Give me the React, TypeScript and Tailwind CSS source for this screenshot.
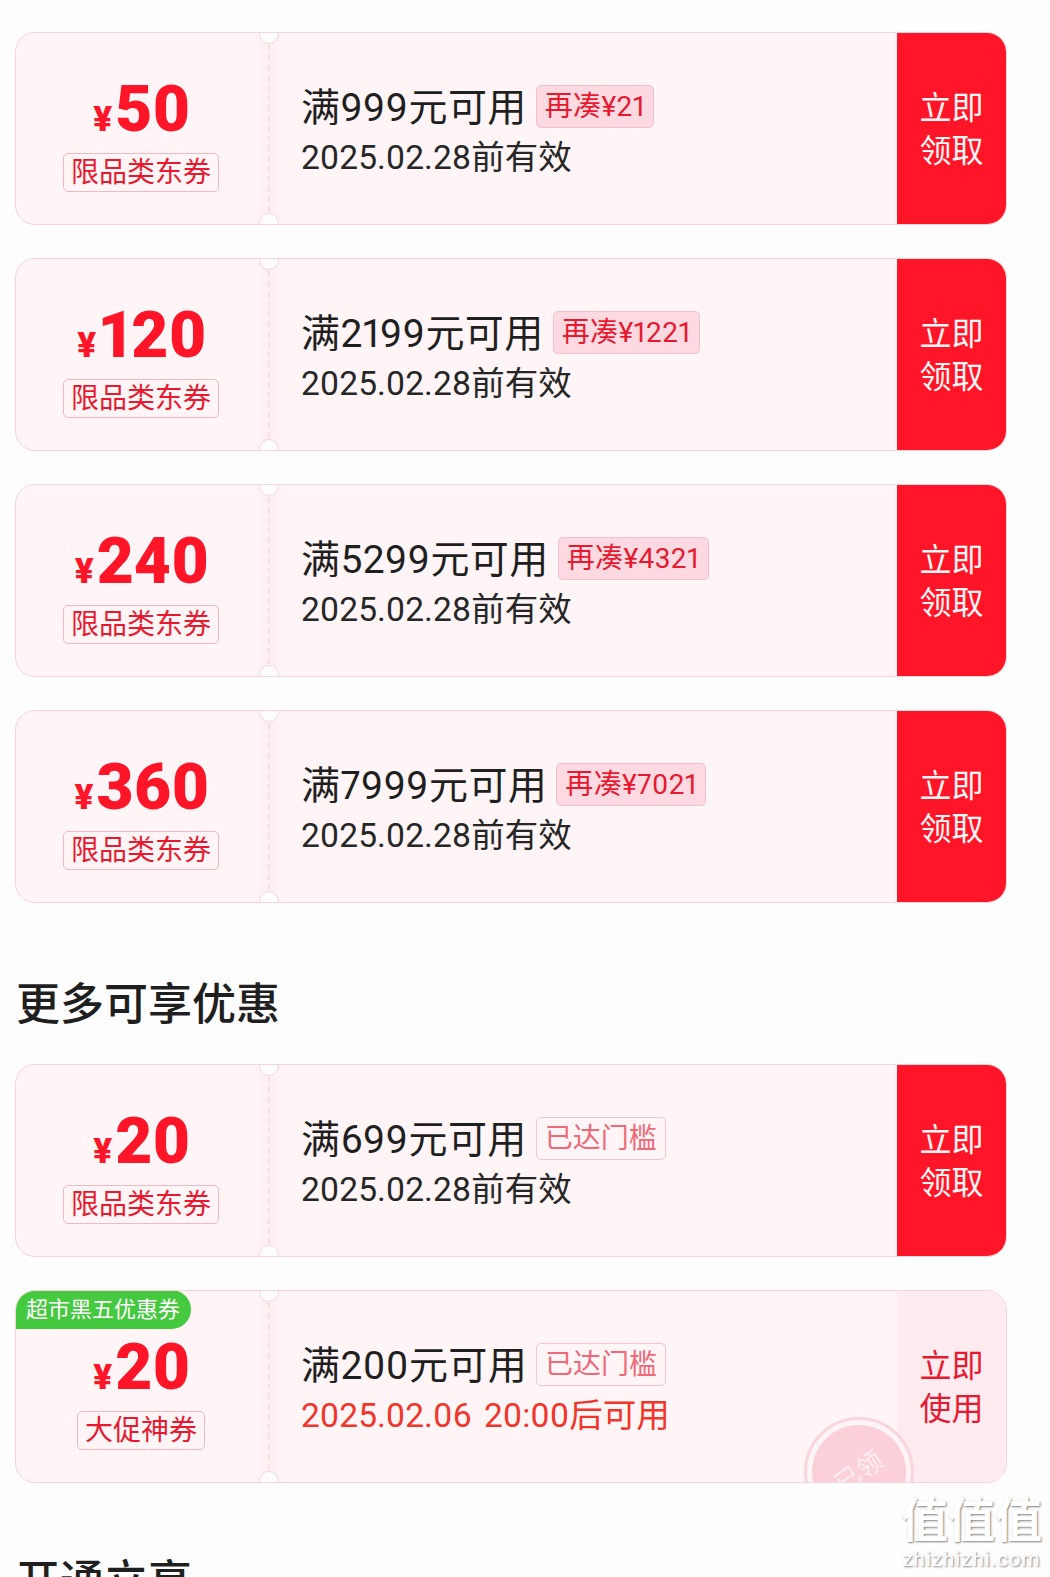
const font = { fontFamily: 'Roboto, "Noto Sans CJK SC", sans-serif' };

type Coupon = {
  amount: string;
  label: string;
  title: string;
  tag: string;
  reached?: boolean;
  date?: string;
  badge?: string;
  used?: boolean;
};

const first: Coupon[] = [
  { amount: "50", label: "限品类东券", title: "满999元可用", tag: "再凑¥21" },
  { amount: "120", label: "限品类东券", title: "满2199元可用", tag: "再凑¥1221" },
  { amount: "240", label: "限品类东券", title: "满5299元可用", tag: "再凑¥4321" },
  { amount: "360", label: "限品类东券", title: "满7999元可用", tag: "再凑¥7021" },
];

const more: Coupon[] = [
  { amount: "20", label: "限品类东券", title: "满699元可用", tag: "已达门槛", reached: true },
  {
    amount: "20",
    label: "大促神券",
    title: "满200元可用",
    tag: "已达门槛",
    reached: true,
    date: "2025.02.06 20:00后可用",
    badge: "超市黑五优惠券",
    used: true,
  },
];

function CouponCard({ coupon }: { coupon: Coupon }) {
  return (
    <div className="relative flex h-[193px] w-[992px] overflow-hidden rounded-[20px] border border-[#f6d5da] bg-[#fff5f7]">
      {coupon.badge && (
        <div className="absolute left-[-1px] top-[-1px] z-10 flex h-[39px] items-center rounded-tl-[20px] rounded-tr-[20px] rounded-br-[20px] bg-[#45c93f] px-[11px] text-[22px] text-white">
          {coupon.badge}
        </div>
      )}

      <div className="flex w-[250px] shrink-0 flex-col items-center justify-center pl-[2px] pt-[13px]">
        <div className="flex h-[62px] items-baseline leading-none text-[#ff1528]">
          <span className="mr-[3px] text-[35px] font-black">¥</span>
          <span className="text-[64px] font-black">{coupon.amount}</span>
        </div>
        <div className="ml-[-2px] mt-[13px] flex h-[39px] items-center rounded-[5px] border border-[#f3b9c3] px-[7px] text-[28px] leading-none text-[#e8192f]">
          {coupon.label}
        </div>
      </div>

      <div className="relative ml-[-11px] w-[28px] shrink-0 bg-[linear-gradient(90deg,#fff5f7,#fdeef1_50%,#fff5f7)]">
        <div className="absolute bottom-[12px] left-[13px] top-[12px] border-l-2 border-dashed border-[#f9dfe3]" />
        <div className="absolute left-[4px] top-[-9px] h-[20px] w-[20px] rounded-full border border-[#f6d5da] bg-[#fdfdfd]" />
        <div className="absolute bottom-[-9px] left-[4px] h-[20px] w-[20px] rounded-full border border-[#f6d5da] bg-[#fdfdfd]" />
      </div>

      <div className="flex flex-1 flex-col justify-center pl-[18px] pt-[7px]">
        <div className="flex items-center gap-[9px]">
          <span className="text-[39px] leading-[50px] tracking-[0.4px] text-[#1f1f1f]">{coupon.title}</span>
          {coupon.reached ? (
            <span className="mb-[2px] flex h-[43px] items-center rounded-[5px] border border-[#f7c5cd] px-[8px] pt-[1px] text-[28px] leading-none text-[#ee6a78]">
              {coupon.tag}
            </span>
          ) : (
            <span className="mb-[2px] flex h-[43px] items-center rounded-[5px] border border-[#f7bfca] bg-[#fdd9e2] px-[8px] pt-[1px] text-[28px] leading-none tracking-[0.4px] text-[#e8192f]">
              {coupon.tag}
            </span>
          )}
        </div>
        <div
          className={`mt-[1px] text-[33.5px] leading-[48px] [word-spacing:4px] ${
            coupon.date ? "text-[#f0352b]" : "text-[#262626]"
          }`}
        >
          {coupon.date ?? "2025.02.28前有效"}
        </div>
      </div>

      <div
        className={`relative flex w-[109px] shrink-0 items-center justify-center pt-[3px] text-center text-[32px] leading-[43px] ${
          coupon.used ? "bg-[#fdebf0] text-[#e8192f]" : "bg-[#ff1528] text-[#fff5f5]"
        }`}
      >
        <div className="w-[66px]">{coupon.used ? "立即使用" : "立即领取"}</div>
      </div>

      {coupon.used && (
        <div className="absolute bottom-[-45px] left-[788px] z-10 flex h-[110px] w-[110px] items-center justify-center rounded-full border-[3px] border-[#fbd5dc] bg-[#fff5f7]/80">
          <div className="flex h-[94px] w-[94px] rotate-[-35deg] items-center justify-center rounded-full bg-[#fbd0d8] text-[26px] leading-none text-[#fdeef1]">
            已领
          </div>
        </div>
      )}
    </div>
  );
}

export default function App() {
  return (
    <div className="proportional-nums relative h-[1577px] w-[1050px] overflow-hidden bg-[#fdfdfd]" style={font}>
      <div className="flex flex-col gap-[33px] pl-[15px] pt-[32px]">
        {first.map((c) => (
          <CouponCard key={c.amount} coupon={c} />
        ))}
      </div>

      <div className="ml-[15px] mt-[33px] h-px w-[992px] bg-[#f8f8f8]" />

      <h2 className="ml-[16px] mt-[38px] text-[44px] font-medium leading-[60px] text-[#1f1f1f]">更多可享优惠</h2>

      <div className="mt-[29px] flex flex-col gap-[33px] pl-[15px]">
        {more.map((c) => (
          <CouponCard key={c.title} coupon={c} />
        ))}
      </div>

      <h2 className="ml-[16px] mt-[69px] text-[44px] font-medium leading-[60px] text-[#1f1f1f]">开通立享</h2>

      <div className="absolute bottom-[6px] right-[8px] flex flex-col items-center text-white [text-shadow:1px_1px_2px_rgba(90,90,90,0.75)]">
        <div className="text-[47px] font-bold leading-[52px]">值值值</div>
        <div className="text-[20.5px] leading-[24px] tracking-[1px]">zhizhizhi.com</div>
      </div>
    </div>
  );
}
